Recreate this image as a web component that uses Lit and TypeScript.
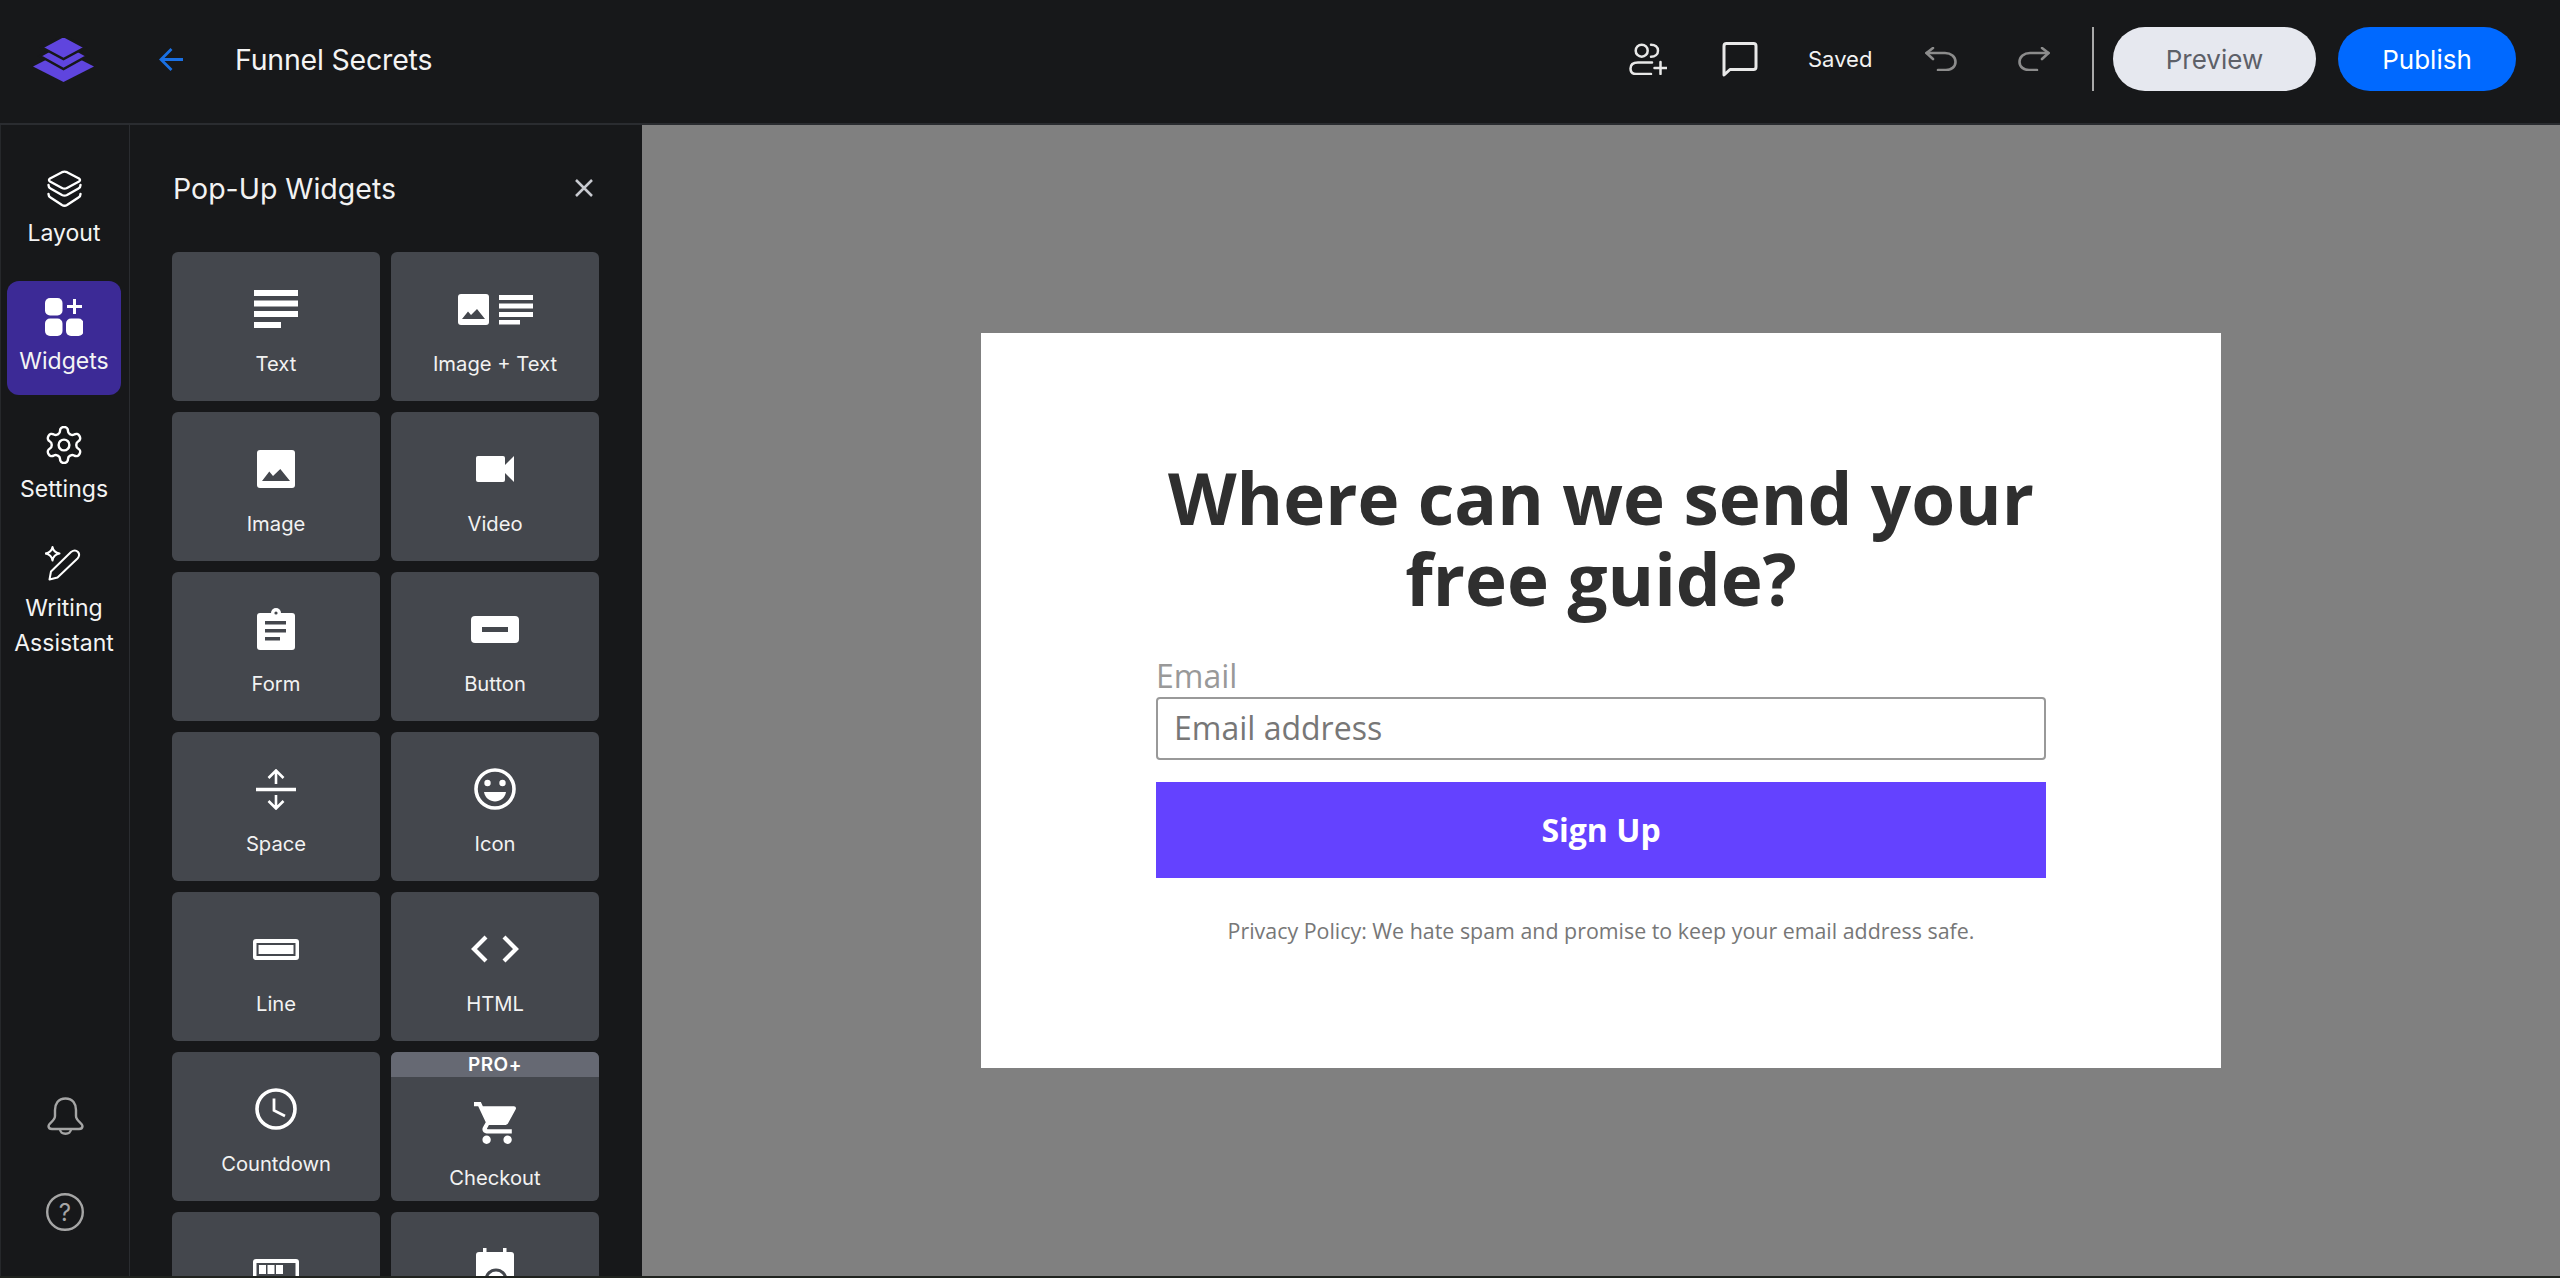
import { LitElement, html, css, nothing } from "lit";
import { customElement } from "lit/decorators.js";

const DARK = "#44474d";

const icons: Record<string, any> = {
  text: html`<svg width="44" height="38" viewBox="0 0 44 38" fill="#fff"><rect width="44" height="6"/><rect y="10.5" width="44" height="6"/><rect y="21" width="44" height="6"/><rect y="32" width="27" height="6"/></svg>`,
  imagetext: html`<svg width="75" height="31" viewBox="0 0 75 31" fill="#fff"><rect width="31" height="31" rx="3"/><polygon points="4,25 10,17.5 13,21 19,15 27,25" fill="${DARK}"/><rect x="41" y="1" width="34" height="5"/><rect x="41" y="9.5" width="34" height="5"/><rect x="41" y="18" width="34" height="5"/><rect x="41" y="26" width="21" height="4.5"/></svg>`,
  image: html`<svg width="38" height="38" viewBox="0 0 38 38" fill="#fff"><rect width="38" height="38" rx="3"/><polygon points="5,31 12.3,21.5 16,26 23.3,19 33,31" fill="${DARK}"/></svg>`,
  video: html`<svg width="38" height="26" viewBox="0 0 38 26" fill="#fff"><rect width="29" height="26" rx="2"/><path d="M28 10 L38 0 V26 L28 16Z"/></svg>`,
  form: html`<svg width="38" height="42" viewBox="0 0 38 42" fill="#fff"><rect y="5" width="38" height="37" rx="3"/><circle cx="19" cy="5" r="5"/><circle cx="19" cy="5" r="1.6" fill="${DARK}"/><rect x="8" y="13" width="21" height="3.5" fill="${DARK}"/><rect x="8" y="21" width="21" height="3.5" fill="${DARK}"/><rect x="8" y="29" width="15" height="3.5" fill="${DARK}"/></svg>`,
  button: html`<svg width="48" height="27" viewBox="0 0 48 27"><rect width="48" height="27" rx="4" fill="#fff"/><rect x="11" y="11" width="26" height="5" fill="${DARK}"/></svg>`,
  space: html`<svg width="40" height="41" viewBox="0 0 40 41" fill="none" stroke="#fff" stroke-width="2.6"><path d="M0 20.5H40" stroke-width="3.6"/><path d="M20 15V2M12.5 9L20 1.5L27.5 9"/><path d="M20 26V39M12.5 32L20 39.5L27.5 32"/></svg>`,
  smile: html`<svg width="42" height="42" viewBox="0 0 42 42"><circle cx="21" cy="21" r="19" fill="none" stroke="#fff" stroke-width="3.6"/><circle cx="13.5" cy="15" r="3.2" fill="#fff"/><circle cx="28.5" cy="15" r="3.2" fill="#fff"/><path d="M10 24H32C31 30 26 33.5 21 33.5C16 33.5 11 30 10 24Z" fill="#fff"/></svg>`,
  line: html`<svg width="46" height="21" viewBox="0 0 46 21"><rect width="46" height="21" rx="3" fill="#fff"/><rect x="4.5" y="5" width="37" height="11" fill="#fff" stroke="${DARK}" stroke-width="2"/></svg>`,
  code: html`<svg width="48" height="28" viewBox="0 0 48 28" fill="none" stroke="#fff" stroke-width="4.2"><path d="M15 2L3 14L15 26"/><path d="M33 2L45 14L33 26"/></svg>`,
  clock: html`<svg width="42" height="42" viewBox="0 0 42 42" fill="none" stroke="#fff"><circle cx="21" cy="21" r="19" stroke-width="3.6"/><path d="M19 10.5V22.5L30 28" stroke-width="2.8"/></svg>`,
  cart: html`<svg width="42" height="42" viewBox="1 2 20 20" fill="#fff"><path d="M7 18c-1.1 0-1.99.9-1.99 2S5.9 22 7 22s2-.9 2-2-.9-2-2-2zM1 2v2h2l3.6 7.59-1.35 2.45c-.16.28-.25.61-.25.96 0 1.1.9 2 2 2h12v-2H7.42c-.14 0-.25-.11-.25-.25l.03-.12.9-1.63h7.45c.75 0 1.41-.41 1.75-1.03l3.58-6.49c.08-.14.12-.31.12-.48 0-.55-.45-1-1-1H5.21l-.94-2H1zm16 16c-1.1 0-1.99.9-1.99 2s.89 2 1.99 2 2-.9 2-2-.9-2-2-2z"/></svg>`,
  progress: html`<svg width="46" height="21" viewBox="0 0 46 21"><rect width="46" height="21" rx="3" fill="#fff"/><rect x="3.5" y="4" width="39" height="13" fill="${DARK}"/><rect x="6" y="6" width="7" height="9" fill="#fff"/><rect x="14.5" y="6" width="7" height="9" fill="#fff"/><rect x="23" y="6" width="7" height="9" fill="#fff"/></svg>`,
  calendar: html`<svg width="38" height="42" viewBox="0 0 38 42" fill="#fff"><rect x="7" width="3.5" height="8"/><rect x="27" width="3.5" height="8"/><rect y="4" width="38" height="38" rx="3"/><circle cx="20" cy="32" r="10" fill="none" stroke="${DARK}" stroke-width="3"/></svg>`,
};

const widgets: { icon: string; label?: string; pro?: boolean }[] = [
  { icon: "text", label: "Text" },
  { icon: "imagetext", label: "Image + Text" },
  { icon: "image", label: "Image" },
  { icon: "video", label: "Video" },
  { icon: "form", label: "Form" },
  { icon: "button", label: "Button" },
  { icon: "space", label: "Space" },
  { icon: "smile", label: "Icon" },
  { icon: "line", label: "Line" },
  { icon: "code", label: "HTML" },
  { icon: "clock", label: "Countdown" },
  { icon: "cart", label: "Checkout", pro: true },
  { icon: "progress" },
  { icon: "calendar" },
];

const railIcons: Record<string, any> = {
  layout: html`<svg width="35" height="38" viewBox="0 0 35 38" fill="none" stroke="#fff" stroke-width="2.4" stroke-linejoin="round" stroke-linecap="round"><path d="M15 2.2Q17.5 1 20 2.2L32 8.5Q34 10 32 11.5L20 18Q17.5 19.3 15 18L3 11.5Q1 10 3 8.5Z"/><path d="M1.5 15Q1.5 17.5 3.5 18.5L15 25Q17.5 26.3 20 25L31.5 18.5Q33.5 17.5 33.5 15"/><path d="M1.5 24Q1.5 26.5 3.5 27.5L15 35Q17.5 36.5 20 35L31.5 27.5Q33.5 26.5 33.5 24"/></svg>`,
  widgets: html`<svg width="38" height="38" viewBox="0 0 38 38" fill="#fff"><rect width="17.5" height="17.5" rx="5"/><rect y="20.5" width="17.5" height="17.5" rx="5"/><rect x="21" y="20.5" width="17.5" height="17.5" rx="5"/><path d="M29.5 1V16M22 8.5H37" stroke="#fff" stroke-width="3" fill="none"/></svg>`,
  settings: html`<svg width="38" height="38" viewBox="1.4 1.4 21.2 21.2" fill="none" stroke="#fff" stroke-width="1.35"><path d="M12.22 2h-.44a2 2 0 0 0-2 2v.18a2 2 0 0 1-1 1.73l-.43.25a2 2 0 0 1-2 0l-.15-.08a2 2 0 0 0-2.73.73l-.22.38a2 2 0 0 0 .73 2.73l.15.1a2 2 0 0 1 1 1.72v.51a2 2 0 0 1-1 1.74l-.15.09a2 2 0 0 0-.73 2.73l.22.38a2 2 0 0 0 2.73.73l.15-.08a2 2 0 0 1 2 0l.43.25a2 2 0 0 1 1 1.73V20a2 2 0 0 0 2 2h.44a2 2 0 0 0 2-2v-.18a2 2 0 0 1 1-1.73l.43-.25a2 2 0 0 1 2 0l.15.08a2 2 0 0 0 2.73-.73l.22-.39a2 2 0 0 0-.73-2.73l-.15-.08a2 2 0 0 1-1-1.74v-.5a2 2 0 0 1 1-1.74l.15-.09a2 2 0 0 0 .73-2.73l-.22-.38a2 2 0 0 0-2.73-.73l-.15.08a2 2 0 0 1-2 0l-.43-.25a2 2 0 0 1-1-1.73V4a2 2 0 0 0-2-2z"/><circle cx="12" cy="12" r="3"/></svg>`,
  writing: html`<svg width="38" height="38" viewBox="0 -1 38 38" fill="none" stroke="#fff" stroke-width="2" stroke-linejoin="round"><path d="M4.5 33.5L6 25.5L26 6Q30 3 33 6Q35.5 9 32.5 12.5L12.5 31.5Z"/><path d="M7.5 1Q8.5 6.5 14.5 7.5Q8.5 8.5 7.5 14.5Q6.5 8.5 .5 7.5Q6.5 6.5 7.5 1Z"/></svg>`,
};

@customElement("app-root")
export class AppRoot extends LitElement {
  static styles = css`
    :host {
      display: flex;
      flex-direction: column;
      width: 100%;
      height: 100vh;
      overflow: hidden;
      background: #17181a;
      font-family: Inter, "Noto Sans", sans-serif;
      color: #fff;
    }
    svg { display: block; flex: none; }
    .header {
      flex: none;
      height: 125px;
      box-sizing: border-box;
      display: flex;
      align-items: center;
      border-bottom: 2px solid #2a2c30;
      background: #17181a;
      padding: 0 44px 5px 33px;
    }
    .arrow { margin-left: 65px; }
    .title { margin-left: 52px; font-size: 28.5px; font-weight: 400; color: #f4f4f4; letter-spacing: -0.2px; }
    .spacer { flex: 1; }
    .people { margin-right: 55px; }
    .comment { margin-right: 50px; }
    .saved { font-size: 22px; margin-right: 53px; width: 64px; color: #f2f2f2; white-space: nowrap; }
    .undo { margin-right: 61px; }
    .redo { margin-right: 42px; }
    .divider { width: 2px; height: 64px; background: #a9a9a9; margin-right: 19px; }
    .pill {
      height: 64px;
      border-radius: 32px;
      display: flex;
      align-items: center;
      justify-content: center;
      font-size: 26px;
    }
    .preview { width: 203px; background: #e6e8ef; color: #5d6068; margin-right: 22px; }
    .publish { width: 178px; background: #0069ff; color: #fff; }
    .body { flex: 1; min-height: 0; display: flex; }
    .rail {
      flex: none;
      width: 130px;
      box-sizing: border-box;
      border-right: 1px solid #2a2c30;
      border-left: 1px solid #26282b;
      display: flex;
      flex-direction: column;
      padding-top: 28px;
      background: #17181a;
    }
    .rail-item {
      width: 114px;
      margin: 0 0 14px 6px;
      padding: 17px 0 16px;
      box-sizing: border-box;
      border-radius: 12px;
      display: flex;
      flex-direction: column;
      align-items: center;
    }
    .rail-item.active { background: #3c2a96; }
    .rail-item.short { padding-bottom: 7px; }
    .rail-label {
      margin-top: 8px;
      font-size: 23px;
      line-height: 35px;
      text-align: center;
      color: #f4f4f4;
    }
    .rail-bottom {
      margin-top: auto;
      display: flex;
      flex-direction: column;
      align-items: center;
      gap: 58px;
      padding: 0 0 45px;
    }
    .panel {
      width: 512px;
      flex: none;
      box-sizing: border-box;
      padding: 43px 42px 0;
      overflow: hidden;
      background: #17181a;
    }
    .panel-head {
      display: flex;
      align-items: center;
      justify-content: space-between;
      height: 40px;
      margin-bottom: 44px;
    }
    .panel-title { font-size: 28.5px; color: #f2f2f2; padding-left: 1px; }
    .close { margin-right: 7px; }
    .grid {
      display: grid;
      grid-template-columns: 208px 208px;
      grid-auto-rows: 149px;
      gap: 11px;
    }
    .card {
      background: #44474d;
      border-radius: 6px;
      overflow: hidden;
      padding-top: 27px;
      box-sizing: border-box;
      display: flex;
      flex-direction: column;
      align-items: center;
    }
    .card.pro { padding-top: 0; }
    .badge {
      align-self: stretch;
      height: 25px;
      flex: none;
      background: #666973;
      font-size: 19px;
      font-weight: 600;
      line-height: 25px;
      text-align: center;
      margin-bottom: 16px;
      letter-spacing: 0.5px;
    }
    .icon-box { height: 60px; flex: none; display: flex; align-items: center; justify-content: center; }
    .card-label {
      margin-top: 12px;
      font-size: 20.2px;
      line-height: 26px;
      color: #f2f2f2;
    }
    .canvas {
      flex: 1;
      min-width: 0;
      background: #808080;
      display: flex;
      align-items: center;
      justify-content: center;
    }
    .modal {
      width: 1240px;
      height: 735px;
      background: #fff;
      box-sizing: border-box;
      padding: 124px 175px 0;
      font-family: "Open Sans", sans-serif;
    }
    h1 {
      margin: 0;
      font-size: 71px;
      font-weight: 700;
      line-height: 81px;
      text-align: center;
      color: #2f2f2f;
    }
    .field-label { margin-top: 38px; font-size: 32px; line-height: 38px; color: #999; }
    .input {
      margin-top: 2px;
      height: 63px;
      box-sizing: border-box;
      border: 2px solid #999;
      border-radius: 4px;
      padding: 0 0 2px 16px;
      display: flex;
      align-items: center;
      font-size: 32px;
      color: #777;
    }
    .submit {
      margin-top: 22px;
      height: 96px;
      box-sizing: border-box;
      padding-bottom: 2px;
      background: #6442ff;
      display: flex;
      align-items: center;
      justify-content: center;
      color: #fff;
      font-size: 32px;
      font-weight: 700;
    }
    .privacy { margin-top: 36px; font-size: 21.4px; line-height: 34px; text-align: center; color: #777; }
    .strip { flex: none; height: 2px; background: #20231f; }
  `;

  render() {
    const g = "#8c8c8c";
    return html`
      <div class="header">
        <svg width="61" height="45" viewBox="0 0 61 45" stroke="#17181a" stroke-width="2.5" fill="#5f45de">
          <polygon points="30.5,14 61,29.5 30.5,45 0,29.5" stroke="none"/>
          <polygon points="30.5,6 54,19 30.5,32 7,19"/>
          <polygon points="30.5,-1 52,10.5 30.5,22 9,10.5"/>
        </svg>
        <svg class="arrow" width="24" height="23" viewBox="0 0 24 23" fill="none" stroke="#1a70e4" stroke-width="2.8"><path d="M24 11.5H2M12.5 1L2 11.5L12.5 22"/></svg>
        <div class="title">Funnel Secrets</div>
        <div class="spacer"></div>
        <svg class="people" width="38" height="32" viewBox="0 0 38 32" fill="none" stroke="#e8e8e8" stroke-width="2.5" stroke-linecap="round">
          <circle cx="12.7" cy="7.7" r="6"/>
          <path d="M22 1.7C26 1.7 29 4 29 7.7C29 11.5 26 13.7 22 13.7"/>
          <path d="M23 19.5H9C4 19.5 1.5 22 1.5 25.5C1.5 29 3.5 31 7 31H22"/>
          <path d="M31.5 19V31M25.5 25H37.5"/>
        </svg>
        <svg class="comment" width="36" height="35" viewBox="0 0 36 35" fill="none" stroke="#e8e8e8" stroke-width="3" stroke-linejoin="round">
          <path d="M2 33V4Q2 1.5 4.5 1.5H31.5Q34 1.5 34 4V25Q34 27.5 31.5 27.5H8Z"/>
        </svg>
        <div class="saved">Saved</div>
        <svg class="undo" width="32" height="24" viewBox="0 0 32 24" fill="none" stroke="${g}" stroke-width="2.6" stroke-linecap="round" stroke-linejoin="round">
          <path d="M8 1L1.5 6L8 12"/><path d="M1.5 6H20C26 6 30.5 9.5 30.5 15C30.5 20 26 23 21 23H13"/>
        </svg>
        <svg class="redo" width="32" height="24" viewBox="0 0 32 24" fill="none" stroke="${g}" stroke-width="2.6" stroke-linecap="round" stroke-linejoin="round">
          <path d="M24 1L30.5 6L24 12"/><path d="M30.5 6H12C6 6 1.5 9.5 1.5 15C1.5 20 6 23 11 23H19"/>
        </svg>
        <div class="divider"></div>
        <div class="pill preview">Preview</div>
        <div class="pill publish">Publish</div>
      </div>
      <div class="body">
        <div class="rail">
          <div class="rail-item">${railIcons.layout}<div class="rail-label">Layout</div></div>
          <div class="rail-item active">${railIcons.widgets}<div class="rail-label">Widgets</div></div>
          <div class="rail-item short">${railIcons.settings}<div class="rail-label">Settings</div></div>
          <div class="rail-item">${railIcons.writing}<div class="rail-label">Writing<br />Assistant</div></div>
          <div class="rail-bottom">
            <svg width="37" height="38" viewBox="0 0 37 38" fill="none" stroke="#a5a5a5" stroke-width="2.4" stroke-linejoin="round">
              <path d="M18.5 1.5C11 1.5 8 7 8 13V19C8 24 1.5 26 1.5 29C1.5 31 3 32 5 32H32C34 32 35.5 31 35.5 29C35.5 26 29 24 29 19V13C29 7 26 1.5 18.5 1.5Z"/>
              <path d="M13 32C13 35 15.5 36.7 18.5 36.7C21.5 36.7 24 35 24 32"/>
            </svg>
            <svg width="38" height="38" viewBox="0 0 38 38">
              <circle cx="19" cy="19" r="17.8" fill="none" stroke="#a5a5a5" stroke-width="2.4"/>
              <text x="19" y="27.5" text-anchor="middle" font-family="Inter, sans-serif" font-size="24" fill="#a5a5a5">?</text>
            </svg>
          </div>
        </div>
        <div class="panel">
          <div class="panel-head">
            <div class="panel-title">Pop-Up Widgets</div>
            <svg class="close" width="18" height="18" viewBox="0 0 18 18" fill="none" stroke="#c8cad0" stroke-width="2.5"><path d="M1 1L17 17M17 1L1 17"/></svg>
          </div>
          <div class="grid">
            ${widgets.map(
              (w) => html`
                <div class="card ${w.pro ? "pro" : ""}">
                  ${w.pro ? html`<div class="badge">PRO+</div>` : nothing}
                  <div class="icon-box">${icons[w.icon]}</div>
                  ${w.label ? html`<div class="card-label">${w.label}</div>` : nothing}
                </div>
              `
            )}
          </div>
        </div>
        <div class="canvas">
          <div class="modal">
            <h1>Where can we send your free guide?</h1>
            <div class="field-label">Email</div>
            <div class="input">Email address</div>
            <div class="submit">Sign Up</div>
            <div class="privacy">Privacy Policy: We hate spam and promise to keep your email address safe.</div>
          </div>
        </div>
      </div>
      <div class="strip"></div>
    `;
  }
}
